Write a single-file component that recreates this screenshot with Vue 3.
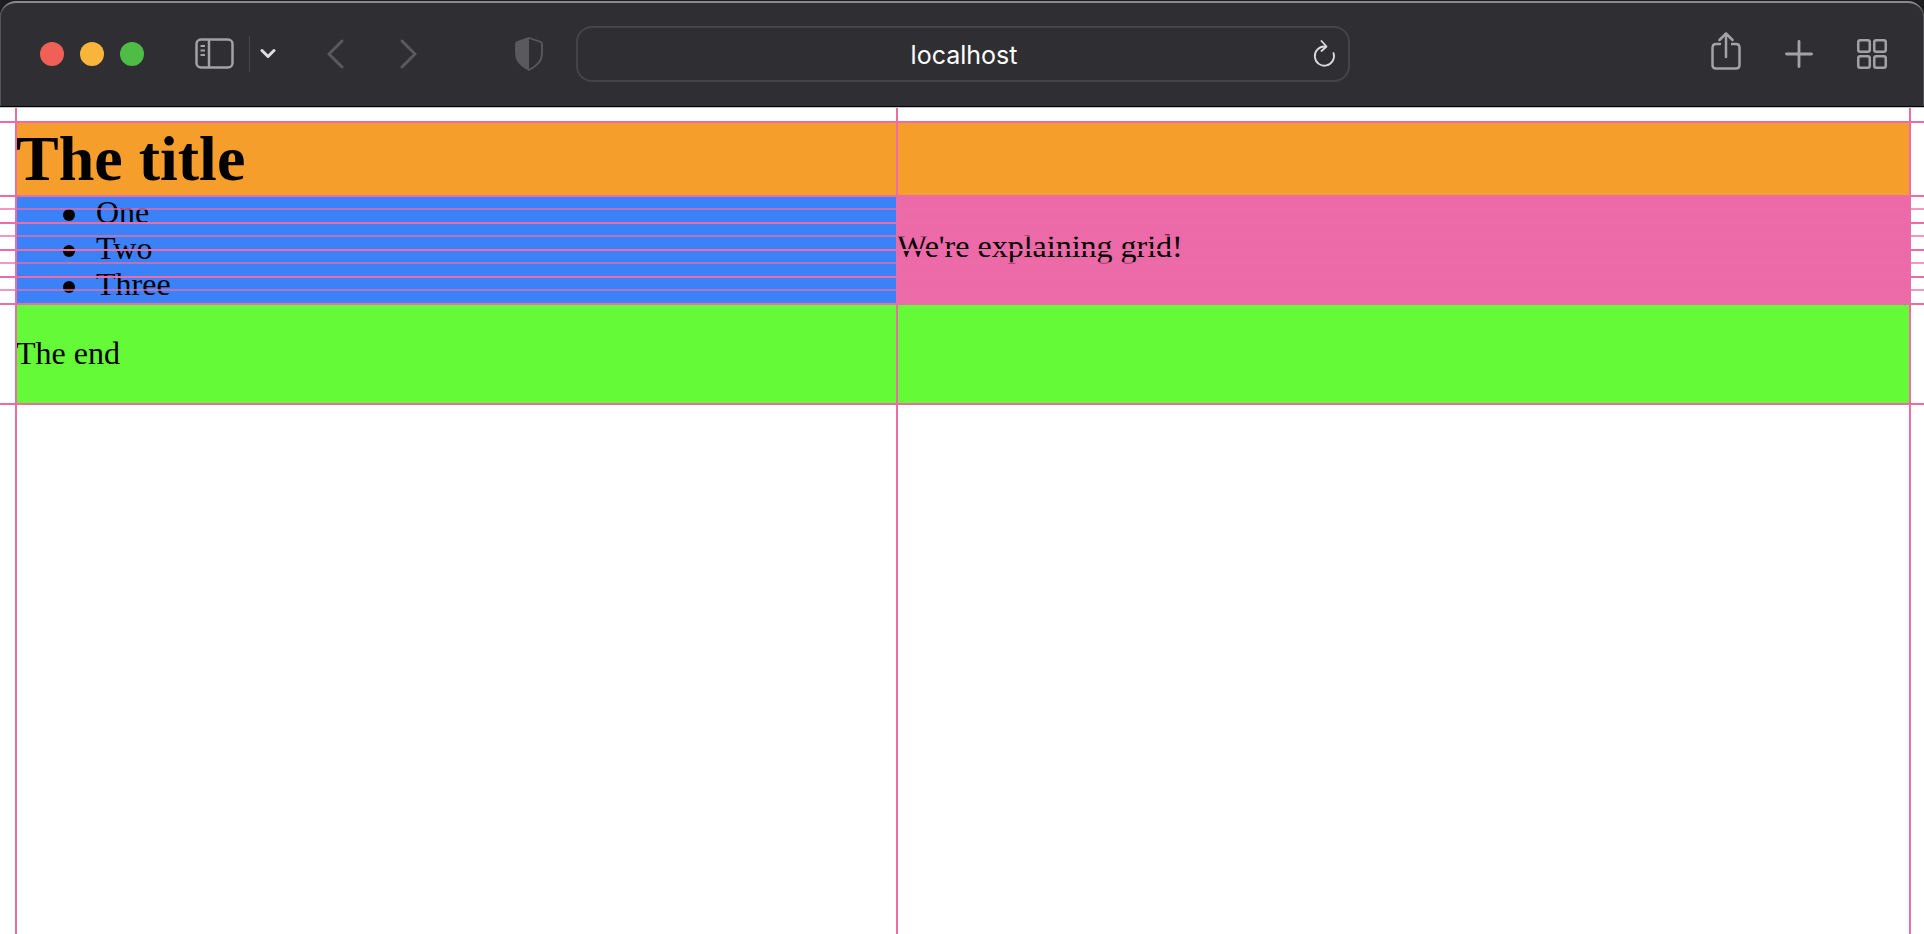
<template>
  <div class="window">
    <div class="toolbar">
      <div class="lights">
        <span class="light red"></span>
        <span class="light yellow"></span>
        <span class="light green"></span>
      </div>
      <svg class="sidebar-icon" width="40" height="32" viewBox="0 0 40 32" fill="none" stroke="#a3a3a7" stroke-width="2.5">
        <rect x="1.5" y="1.5" width="36" height="28" rx="4.5"></rect>
        <line x1="14" y1="1.5" x2="14" y2="29.5"></line>
        <line x1="5.5" y1="8" x2="10" y2="8" stroke-width="2"></line>
        <line x1="5.5" y1="12.5" x2="10" y2="12.5" stroke-width="2"></line>
        <line x1="5.5" y1="17" x2="10" y2="17" stroke-width="2"></line>
      </svg>
      <span class="divider"></span>
      <svg class="chevron" width="16" height="11" viewBox="0 0 16 11" fill="none" stroke="#dedee0" stroke-width="3" stroke-linecap="round" stroke-linejoin="round">
        <polyline points="2,2.5 8,8.5 14,2.5"></polyline>
      </svg>
      <svg class="back" width="18" height="30" viewBox="0 0 18 30" fill="none" stroke="#59595e" stroke-width="3" stroke-linecap="round" stroke-linejoin="round">
        <polyline points="15,2 2,15 15,28"></polyline>
      </svg>
      <svg class="forward" width="18" height="30" viewBox="0 0 18 30" fill="none" stroke="#59595e" stroke-width="3" stroke-linecap="round" stroke-linejoin="round">
        <polyline points="3,2 16,15 3,28"></polyline>
      </svg>
      <svg class="shield" width="28" height="34" viewBox="0 0 28 34">
        <path d="M14 1 L26 5 Q27 5.5 27 7 V17 C27 25 20 30 14 33 C8 30 1 25 1 17 V7 Q1 5.5 2 5 Z" fill="none" stroke="#59595e" stroke-width="1.8"></path>
        <path d="M14 1 L2 5 Q1 5.5 1 7 V17 C1 25 8 30 14 33 Z" fill="#59595e"></path>
      </svg>
      <div class="address">
        <span class="host">localhost</span>
        <svg class="reload" width="24" height="28" viewBox="0 0 24 28" fill="none" stroke="#dcdcde" stroke-width="1.8" stroke-linecap="round" stroke-linejoin="round">
          <path d="M12.5 6.5 A9.6 9.6 0 1 0 21.5 13"></path>
          <polyline points="9.5,1 14.5,6.5 9.5,11"></polyline>
        </svg>
      </div>
      <div class="actions">
        <svg class="share" width="30" height="38" viewBox="0 0 30 38" fill="none" stroke="#a3a3a7" stroke-width="2.5" stroke-linecap="round" stroke-linejoin="round">
          <path d="M9 12 H5 Q1.5 12 1.5 16 V33 Q1.5 36.5 5 36.5 H25 Q28.5 36.5 28.5 33 V16 Q28.5 12 25 12 H21"></path>
          <line x1="15" y1="2" x2="15" y2="25"></line>
          <polyline points="8.5,8 15,1.5 21.5,8"></polyline>
        </svg>
        <svg class="plus" width="28" height="28" viewBox="0 0 28 28" fill="none" stroke="#a3a3a7" stroke-width="2.8" stroke-linecap="round">
          <line x1="14" y1="1.5" x2="14" y2="26.5"></line>
          <line x1="1.5" y1="14" x2="26.5" y2="14"></line>
        </svg>
        <svg class="tabs" width="30" height="30" viewBox="0 0 30 30" fill="none" stroke="#a3a3a7" stroke-width="2.5">
          <rect x="1.25" y="1.25" width="11.5" height="11.5" rx="2"></rect>
          <rect x="17.25" y="1.25" width="11.5" height="11.5" rx="2"></rect>
          <rect x="1.25" y="17.25" width="11.5" height="11.5" rx="2"></rect>
          <rect x="17.25" y="17.25" width="11.5" height="11.5" rx="2"></rect>
        </svg>
      </div>
    </div>

    <div class="page">
      <div class="grid">
        <header class="header">
          <h1>The title</h1>
        </header>
        <aside class="sidebar">
          <ul>
            <li v-for="item in items" :key="item">{{ item }}</li>
          </ul>
        </aside>
        <main class="content">We're explaining grid!</main>
        <footer class="footer">The end</footer>
      </div>

      <!-- devtools grid overlay -->
      <div class="overlay">
        <span
          v-for="line in rowLines"
          :key="line.y"
          class="row-line"
          :class="{ faint: line.faint }"
          :style="{ top: line.y + 'px' }"
        ></span>
        <span
          v-for="x in colLines"
          :key="x"
          class="col-line"
          :style="{ left: x + 'px' }"
        ></span>
      </div>
    </div>
  </div>
</template>

<script setup>
const items = ['One', 'Two', 'Three'];

// positions are relative to .page
const rowOffsets = [13, 87, 100.5, 114, 127.5, 141, 154.5, 168, 181.5, 195, 295];
const rowLines = rowOffsets.map((y) => ({
  y: Math.floor(y),
  faint: y % 1 !== 0,
}));
const colLines = [15, 896, 1909];
</script>

<style>
html,
body {
  margin: 0;
  background: #fff;
  overflow: hidden;
}
</style>

<style scoped>
.window {
  font-family: "Liberation Serif", serif;
  font-size: 32px;
  color: #000;
  background: #1d1d1f;
  height: 934px;
  display: flex;
  flex-direction: column;
}

.toolbar {
  box-sizing: border-box;
  height: 106px;
  margin-top: 1px;
  flex: none;
  display: flex;
  align-items: center;
  background: #2f2f33;
  border-top: 2px solid #8a8a8c;
  border-bottom: 1px solid #000;
  border-radius: 16px 16px 0 0;
  box-shadow: inset 1px 0 0 #555558, inset -1px 0 0 #555558;
  padding-bottom: 2px;
}

.lights {
  display: flex;
  gap: 16px;
  margin-left: 40px;
}

.light {
  width: 24px;
  height: 24px;
  border-radius: 50%;
}

.red {
  background: #f16057;
}

.yellow {
  background: #f7b53c;
}

.green {
  background: #4fbd45;
}

.sidebar-icon {
  margin-left: 51px;
}

.divider {
  width: 1px;
  height: 36px;
  margin-left: 14px;
  background: #47474b;
}

.chevron {
  margin-left: 10px;
}

.back {
  margin-left: 51px;
}

.forward {
  margin-left: 54px;
}

.shield {
  margin-left: 98px;
}

.address {
  box-sizing: border-box;
  width: 774px;
  height: 56px;
  margin-left: 33px;
  border: 2px solid #454549;
  border-radius: 16px;
  display: flex;
  align-items: center;
  justify-content: center;
  position: relative;
}

.host {
  font-family: Inter, "Liberation Sans", sans-serif;
  font-size: 25px;
  color: #fff;
  margin-top: 2px;
  margin-left: 2px;
}

.reload {
  position: absolute;
  right: 12px;
  top: 12px;
}

.actions {
  display: flex;
  align-items: center;
  gap: 43.5px;
  margin-left: auto;
  margin-right: 37px;
}

.tabs {
  margin-left: 1px;
}

.share {
  margin-bottom: 5px;
}

.page {
  flex: 1;
  position: relative;
  background: #fff;
  overflow: hidden;
  padding: 15px 14px 0 16px;
  border-top: 1px solid #c4c4c4;
}

.grid {
  display: grid;
  grid-template-columns: 881px 1fr;
  grid-template-rows: 74px repeat(8, 13.5px) 100px;
}

.header {
  grid-column: 1 / 3;
  background: #f59e2b;
  display: flex;
  align-items: center;
  padding-bottom: 3px;
}

h1 {
  margin: 0;
  font-size: 64px;
  font-weight: 700;
}

.sidebar {
  grid-column: 1;
  grid-row: 2 / 10;
  background: #3b82f8;
}

ul {
  margin: -3px 0 0;
  padding-left: 80px;
  list-style: none;
}

li {
  position: relative;
  line-height: 36px;
}

li::before {
  content: "";
  position: absolute;
  left: -33px;
  top: 15px;
  width: 12px;
  height: 12px;
  border-radius: 50%;
  background: #000;
}

.content {
  grid-column: 2;
  grid-row: 2 / 10;
  background: #ec6aa7;
  display: flex;
  align-items: center;
  padding-bottom: 10px;
}

.footer {
  grid-column: 1 / 3;
  background: #65fa38;
  display: flex;
  align-items: center;
  padding-bottom: 3px;
}

.overlay {
  position: absolute;
  inset: 0;
  pointer-events: none;
}

.row-line {
  position: absolute;
  left: 0;
  right: 0;
  height: 2px;
  background: #ec6ca8;
}

.row-line.faint {
  opacity: 0.7;
}

.col-line {
  position: absolute;
  top: 0;
  bottom: 0;
  width: 2px;
  background: #ec6ca8;
}
</style>
